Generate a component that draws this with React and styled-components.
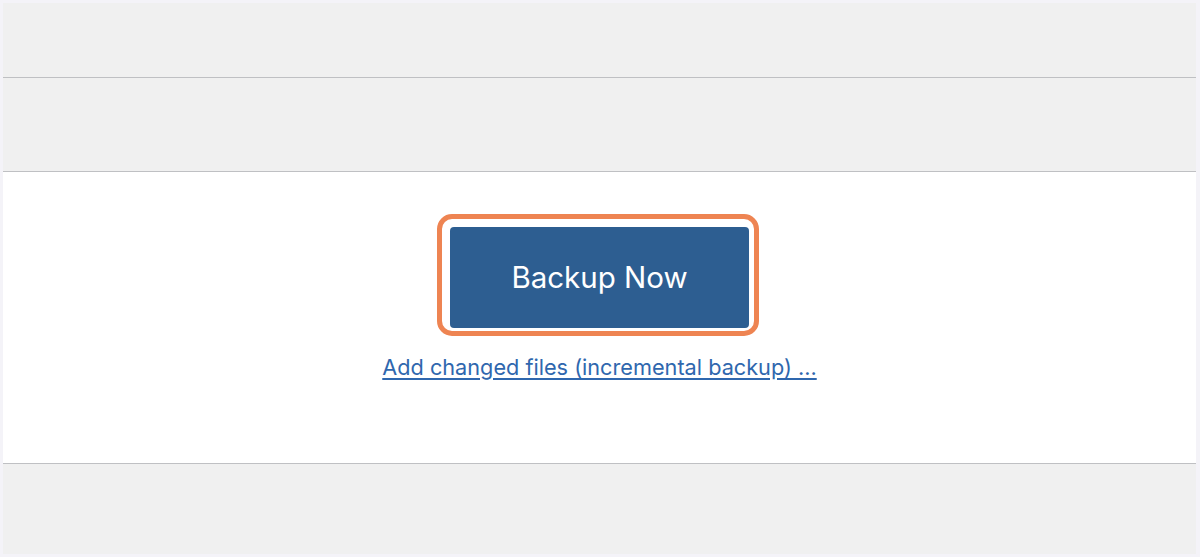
import React from 'react'
import styled, { createGlobalStyle } from 'styled-components'

const GlobalStyle = createGlobalStyle`
  html, body {
    margin: 0;
    padding: 0;
    background: #f4f3f8;
  }
  body {
    font-family: Inter, "Liberation Sans", Arial, sans-serif;
  }
`;

const App = () => {
  return (
    <>
      <GlobalStyle />
      <Frame>
        <Screen>
          <Band height={74} />
          <Band height={93} />
          <Panel>
            <Highlight>
              <BackupButton type="button">Backup Now</BackupButton>
            </Highlight>
            <IncrementalLink href="#">Add changed files (incremental backup) ...</IncrementalLink>
          </Panel>
          <Band height={90} last />
        </Screen>
      </Frame>
    </>
  )
}

const Frame = styled.div`
  width: 1200px;
  height: 557px;
  box-sizing: border-box;
  padding: 3px 4px 4px 3px;
  background: #f4f3f8;
`;

const Screen = styled.div`
  height: 100%;
  display: flex;
  flex-direction: column;
  background: #f0f0f0;
`;

const Band = styled.div`
  height: ${p => p.height}px;
  flex-shrink: 0;
  border-bottom: ${p => (p.last ? 'none' : '1px solid #bfc0c3')};
  box-shadow: ${p => (p.last ? 'none' : '0 1px 0 #dcdcde')};
  background: #f0f0f0;
`;

const Panel = styled.div`
  height: 292px;
  flex-shrink: 0;
  box-sizing: border-box;
  background: #fff;
  border-bottom: 1px solid #bfc0c3;
  display: flex;
  flex-direction: column;
  align-items: center;
  padding-top: 42px;
`;

const Highlight = styled.div`
  margin-right: 3px;
  padding: 8px 5px 3px 8px;
  border: 5px solid #ee8452;
  border-radius: 15px;
  background: #fff;
`;

const BackupButton = styled.button`
  display: flex;
  align-items: center;
  justify-content: center;
  width: 299px;
  height: 101px;
  border: none;
  border-radius: 4px;
  background: #2d5e91;
  color: #fff;
  font-family: Inter, "Liberation Sans", Arial, sans-serif;
  font-size: 29.5px;
  font-weight: 400;
  padding: 0 0 2px;
  cursor: pointer;
`;

const IncrementalLink = styled.a`
  margin-top: 18px;
  color: #2f67ae;
  font-size: 21.7px;
  text-decoration: underline;
  text-underline-offset: 3px;
  line-height: 26px;
`;

export default App
